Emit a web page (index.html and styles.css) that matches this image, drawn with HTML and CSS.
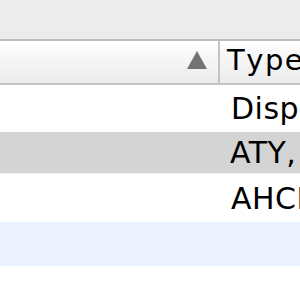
FILE: index.html
```html
<html lang="en">
<head>
    <meta name="viewport" content="width=device-width, initial-scale=1.0">
    <title>Devices</title>
    <link rel="stylesheet" href="styles.css">
</head>
<body>
    <div class="toolbar"></div>
    <div class="table">
        <div class="headerRow">
            <div class="nameCol">
                <span class="sortArrow"></span>
            </div>
            <div class="typeCol">Type</div>
        </div>
        <div class="row first">
            <div class="nameCol"></div>
            <div class="typeCol">Display</div>
        </div>
        <div class="row selected">
            <div class="nameCol"></div>
            <div class="typeCol">ATY, Radeon</div>
        </div>
        <div class="row third">
            <div class="nameCol"></div>
            <div class="typeCol">AHCI</div>
        </div>
        <div class="row striped">
            <div class="nameCol"></div>
            <div class="typeCol"></div>
        </div>
    </div>
</body>
</html>
```

FILE: styles.css
```css
body {
    font-family: "DejaVu Sans", sans-serif;
    background-color: #fff;
    margin: 0;
    overflow: hidden;
}
.toolbar {
    height: 39px;
    background-color: #ececec;
}
.table {
    border-top: 2px solid #bdbdbd;
}
.headerRow {
    display: flex;
    height: 42px;
    background: linear-gradient(#ffffff, #f6f6f6 40%, #ececec);
    border-bottom: 2px solid #c2c2c2;
}
.headerRow .nameCol {
    width: 220px;
    flex-shrink: 0;
    display: flex;
    align-items: center;
    justify-content: flex-end;
    padding-right: 11px;
    box-sizing: border-box;
    border-right: 2px solid #c4c4c4;
}
.sortArrow {
    width: 0;
    height: 0;
    border-left: 10px solid transparent;
    border-right: 10px solid transparent;
    border-bottom: 18px solid #727272;
    margin-top: -4px;
}
.headerRow .typeCol {
    font-size: 29px;
    padding-left: 7px;
    line-height: 38px;
    letter-spacing: 1.5px;
    font-kerning: none;
    color: #000;
    white-space: nowrap;
}
.row {
    display: flex;
    align-items: center;
    white-space: nowrap;
}
.row .nameCol {
    width: 220px;
    flex-shrink: 0;
}
.row .typeCol {
    font-size: 30px;
    padding-left: 11px;
    letter-spacing: 0.5px;
    color: #000;
}
.first {
    height: 47px;
}
.selected {
    height: 41px;
    background-color: #d4d4d4;
}
.selected .typeCol {
    padding-left: 10px;
}
.third {
    height: 48px;
    border-top: 1px solid #eef3fd;
}
.striped {
    height: 44px;
    background-color: #edf3fe;
}
```
